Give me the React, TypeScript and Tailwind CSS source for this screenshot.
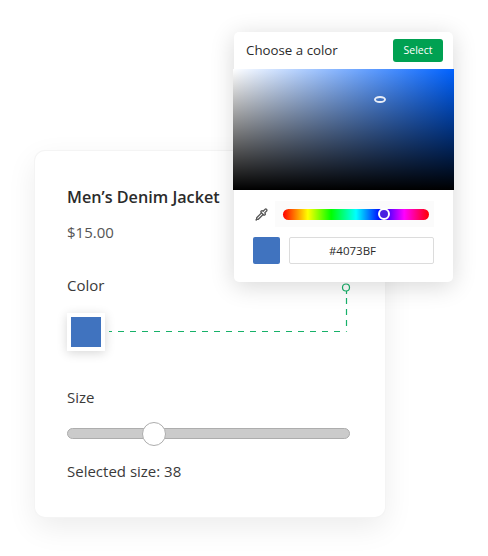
import { Pipette } from "lucide-react"

export default function App() {
  return (
    <div className="relative w-[488px] h-[556px] overflow-hidden bg-white font-['Open_Sans',sans-serif]">
      {/* product card */}
      <div className="absolute left-[35px] top-[151px] w-[350px] h-[366px] rounded-[10px] bg-white shadow-[0_0_0_1px_#f4f4f4,0_10px_30px_rgba(0,0,0,0.08)] pl-[32px] pr-[35px] pt-[34px]">
        <h3 className="text-[16.2px] leading-[24px] font-semibold text-[#2b2b2b]">Men’s Denim Jacket</h3>
        <p className="mt-[13px] text-[15px] leading-[20px] text-[#555]">$15.00</p>
        <p className="mt-[33px] text-[15px] leading-[20px] text-[#3a3a3a]">Color</p>
        <div className="mt-[18px] w-[38px] h-[38px] bg-white p-[4px] shadow-[0_2px_10px_rgba(0,0,0,0.16)]">
          <div className="w-full h-full bg-[#4073BF]" />
        </div>
        <p className="mt-[36px] text-[15px] leading-[20px] text-[#3a3a3a]">Size</p>
        <div className="relative mt-[21px] h-[11px] w-[283px] rounded-full bg-[#cbcbcb] border border-[#adadad]">
          <div className="absolute left-[74px] top-[-7px] w-[24px] h-[24px] rounded-full bg-white border border-[#adadad]" />
        </div>
        <p className="mt-[22px] text-[15px] leading-[20px] text-[#3a3a3a]">Selected size: 38</p>
      </div>

      {/* dashed connector */}
      <svg className="absolute left-[100px] top-[280px]" width="260" height="60" fill="none">
        <circle cx="246" cy="7.5" r="3.5" stroke="#17b169" strokeWidth="1.2" fill="white" />
        <path d="M246.5 11V14" stroke="#17b169" strokeWidth="1.2" />
        <path d="M246.5 18V51.5" stroke="#17b169" strokeWidth="1.2" strokeDasharray="6 5" />
        <path d="M9 51.5H246.5" stroke="#17b169" strokeWidth="1.2" strokeDasharray="6 6" strokeDashoffset="3" />
      </svg>

      {/* color picker */}
      <div className="absolute left-[234px] top-[32px] w-[219px] h-[250px] rounded-[5px] bg-white shadow-[0_4px_24px_rgba(0,0,0,0.16)]">
        <div className="flex items-center justify-between h-[37px] pl-[12px] pr-[10px]">
          <span className="text-[13.3px] text-[#2b2b2b]">Choose a color</span>
          <button className="w-[50px] h-[23px] rounded-[3px] bg-[#00a152] text-[10.5px] text-white">Select</button>
        </div>
        <div className="relative h-[121px] -mx-px bg-[linear-gradient(to_top,#000,transparent),linear-gradient(to_right,#fff,#0062ff)]">
          <div className="absolute left-[141px] top-[27px] w-[12px] h-[7px] rounded-[50%] border-2 border-[#e8eef8]" />
        </div>
        <div className="flex items-center mt-[11px] pl-[21px] pr-[19px]">
          <Pipette className="w-[13px] h-[13px] text-[#555] mr-[7px]" strokeWidth={2.4} />
          <div className="flex-1 h-[26px] flex items-center pl-[8px] pr-[5px] bg-[#fbfbfb]">
            <div className="relative w-full h-[11px] rounded-full bg-[linear-gradient(to_right,#f00,#ff0_17%,#0f0_33%,#0ff_50%,#00f_67%,#f0f_83%,#f00)]">
              <div className="absolute left-[95px] top-[-1px] w-[12px] h-[12px] rounded-full bg-[#4a20e0] border-[2px] border-white" />
            </div>
          </div>
        </div>
        <div className="flex items-center gap-[9px] mt-[10px] pl-[19px] pr-[19px]">
          <div className="w-[27px] h-[27px] rounded-[2px] bg-[#4073BF]" />
          <div className="flex-1 h-[27px] flex items-center justify-center pr-[18px] rounded-[2px] border border-[#dcdcdc] text-[11.5px] text-[#2b2b2b]">#4073BF</div>
        </div>
      </div>
    </div>
  )
}
